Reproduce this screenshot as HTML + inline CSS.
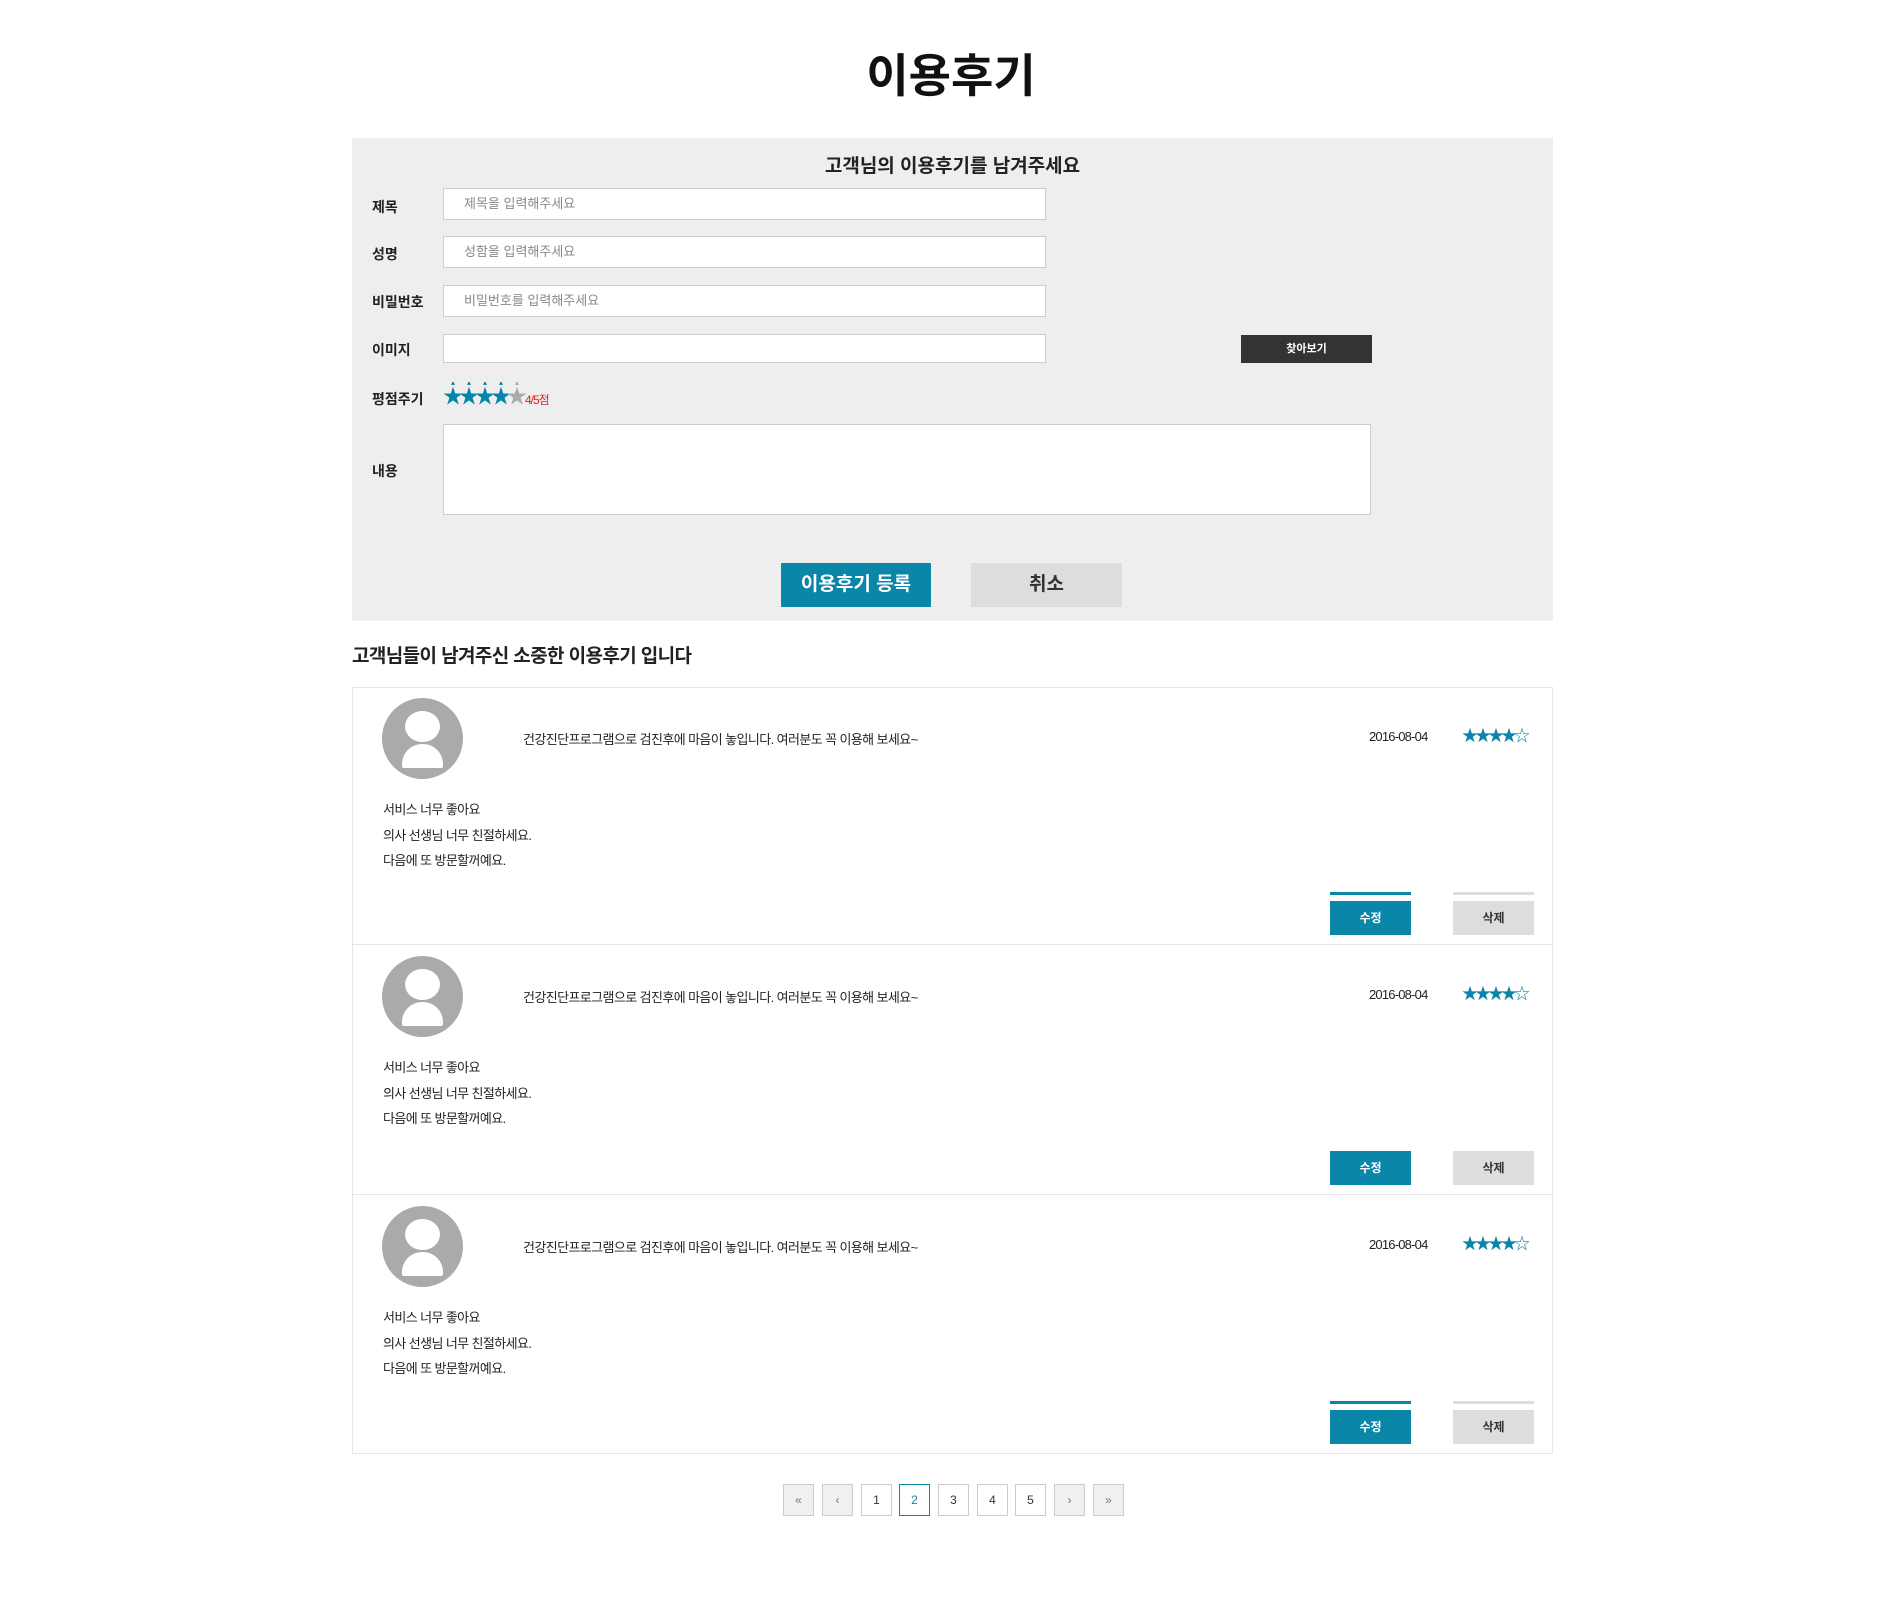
<!DOCTYPE html>
<html><head><meta charset="utf-8"><style>
*{margin:0;padding:0;box-sizing:border-box}
body{width:1902px;height:1614px;background:#fff;position:relative;font-family:"Liberation Sans","Noto Sans CJK KR",sans-serif;color:#222;overflow:hidden}
.a{position:absolute}
.lbl{position:absolute;left:372px;font-size:14px;font-weight:bold;color:#222;line-height:20px}
.inp{position:absolute;left:443px;width:603px;height:32px;background:#fff;border:1px solid #ccc;font-size:13px;color:#888;padding-left:20px;line-height:30px}
.item{position:absolute;left:352px;width:1201px;border-top:1px solid #e6e6e6}
.av{position:absolute;left:30px;width:81px;height:81px;border-radius:50%;background:#aaa;overflow:hidden}
.av .h{position:absolute;left:23px;top:13px;width:35px;height:31px;border-radius:50%;background:#fff}
.av .b{position:absolute;left:20px;top:46px;width:41px;height:24px;border-radius:20px 20px 2px 2px;background:#fff}
.t{position:absolute;left:171px;font-size:13px;letter-spacing:-0.6px;color:#222}
.d{position:absolute;left:1017px;font-size:13px;letter-spacing:-0.8px}
.st{position:absolute;left:1110px;font-size:16px;color:#0a86a8;letter-spacing:-3px;line-height:18px}
.bd{position:absolute;left:31px;font-size:13px;line-height:25.5px;letter-spacing:-0.6px}
.bt{position:absolute;width:81px;height:34px;font-size:12px;font-weight:bold;text-align:center;line-height:34px}
.e{left:978px;background:#0a86a8;color:#fff}
.x{left:1101px;background:#ddd;color:#333}
.ln{position:absolute;width:81px;height:3px}
.pg{position:absolute;top:1484px;width:31px;height:32px;border:1px solid #ccc;font-size:12px;text-align:center;line-height:30px;color:#333;background:#fff}
.pg.g{background:#f0f0f0;color:#777}
</style></head><body>
<div class="a" style="left:0;width:1902px;top:46px;text-align:center;font-size:46px;font-weight:bold;color:#111;line-height:60px">이용후기</div>
<div class="a" style="left:352px;top:138px;width:1201px;height:483px;background:#eee"></div>
<div class="a" style="left:352px;width:1201px;top:154px;text-align:center;font-size:19px;font-weight:bold;color:#222;line-height:26px">고객님의 이용후기를 남겨주세요</div>
<div class="lbl" style="top:197px">제목</div><div class="inp" style="top:188px">제목을 입력해주세요</div>
<div class="lbl" style="top:244px">성명</div><div class="inp" style="top:236px">성함을 입력해주세요</div>
<div class="lbl" style="top:292px">비밀번호</div><div class="inp" style="top:285px">비밀번호를 입력해주세요</div>
<div class="lbl" style="top:340px">이미지</div><div class="inp" style="top:334px;height:29px"></div>
<div class="a" style="left:1241px;top:335px;width:131px;height:28px;background:#333;color:#fff;font-size:11px;font-weight:bold;text-align:center;line-height:28px">찾아보기</div>
<div class="a" style="left:443px;top:382px;width:80px;height:3px;overflow:hidden"><div style="font-size:20px;color:#0a86a8;letter-spacing:-4px;line-height:20px;margin-top:-2px">★★★★<span style="color:#aaa">★</span></div></div>
<div class="lbl" style="top:389px">평점주기</div>
<div class="a" style="left:443px;top:385px;font-size:20px;color:#0a86a8;letter-spacing:-4px;line-height:24px">★★★★<span style="color:#aaa">★</span></div>
<div class="a" style="left:525px;top:392px;font-size:12px;color:#d22;letter-spacing:-1px;line-height:16px">4/5점</div>
<div class="lbl" style="top:461px">내용</div>
<div class="a" style="left:443px;top:424px;width:928px;height:91px;background:#fff;border:1px solid #ccc"></div>
<div class="a" style="left:781px;top:563px;width:150px;height:44px;background:#0a86a8;color:#fff;font-size:19px;font-weight:bold;text-align:center;line-height:44px">이용후기 등록</div>
<div class="a" style="left:971px;top:563px;width:151px;height:44px;background:#ddd;color:#333;font-size:19px;font-weight:bold;text-align:center;line-height:44px">취소</div>
<div class="a" style="left:352px;top:644px;font-size:19px;font-weight:bold;color:#222;line-height:26px;letter-spacing:-0.6px">고객님들이 남겨주신 소중한 이용후기 입니다</div>
<div class="a" style="left:352px;top:687px;width:1201px;height:767px;border:1px solid #e6e6e6"></div>

<div class="item" style="top:687px;height:257px;border-top:none">
<div class="av" style="top:11px"><div class="h"></div><div class="b"></div></div>
<div class="t" style="top:42px">건강진단프로그램으로 검진후에 마음이 놓입니다. 여러분도 꼭 이용해 보세요~</div>
<div class="d" style="top:42px">2016-08-04</div><div class="st" style="top:41px">★★★★☆</div>
<div class="bd" style="top:110px">서비스 너무 좋아요<br>의사 선생님 너무 친절하세요.<br>다음에 또 방문할꺼예요.</div>
<div class="ln" style="left:978px;top:205px;background:#0a86a8"></div><div class="ln" style="left:1101px;top:205px;background:#ddd"></div>
<div class="bt e" style="top:214px">수정</div><div class="bt x" style="top:214px">삭제</div>
</div>
<div class="item" style="top:944px;height:250px">
<div class="av" style="top:11px"><div class="h"></div><div class="b"></div></div>
<div class="t" style="top:42px">건강진단프로그램으로 검진후에 마음이 놓입니다. 여러분도 꼭 이용해 보세요~</div>
<div class="d" style="top:42px">2016-08-04</div><div class="st" style="top:41px">★★★★☆</div>
<div class="bd" style="top:110px">서비스 너무 좋아요<br>의사 선생님 너무 친절하세요.<br>다음에 또 방문할꺼예요.</div>
<div class="bt e" style="top:206px">수정</div><div class="bt x" style="top:206px">삭제</div>
</div>
<div class="item" style="top:1194px;height:260px">
<div class="av" style="top:11px"><div class="h"></div><div class="b"></div></div>
<div class="t" style="top:42px">건강진단프로그램으로 검진후에 마음이 놓입니다. 여러분도 꼭 이용해 보세요~</div>
<div class="d" style="top:42px">2016-08-04</div><div class="st" style="top:41px">★★★★☆</div>
<div class="bd" style="top:110px">서비스 너무 좋아요<br>의사 선생님 너무 친절하세요.<br>다음에 또 방문할꺼예요.</div>
<div class="ln" style="left:978px;top:206px;background:#0a86a8"></div><div class="ln" style="left:1101px;top:206px;background:#ddd"></div>
<div class="bt e" style="top:215px">수정</div><div class="bt x" style="top:215px">삭제</div>
</div>

<div class="pg g" style="left:783px">«</div>
<div class="pg g" style="left:822px">‹</div>
<div class="pg" style="left:861px">1</div>
<div class="pg" style="left:899px;border-color:#0a86a8;color:#0a86a8">2</div>
<div class="pg" style="left:938px">3</div>
<div class="pg" style="left:977px">4</div>
<div class="pg" style="left:1015px">5</div>
<div class="pg g" style="left:1054px">›</div>
<div class="pg g" style="left:1093px">»</div>
</body></html>
